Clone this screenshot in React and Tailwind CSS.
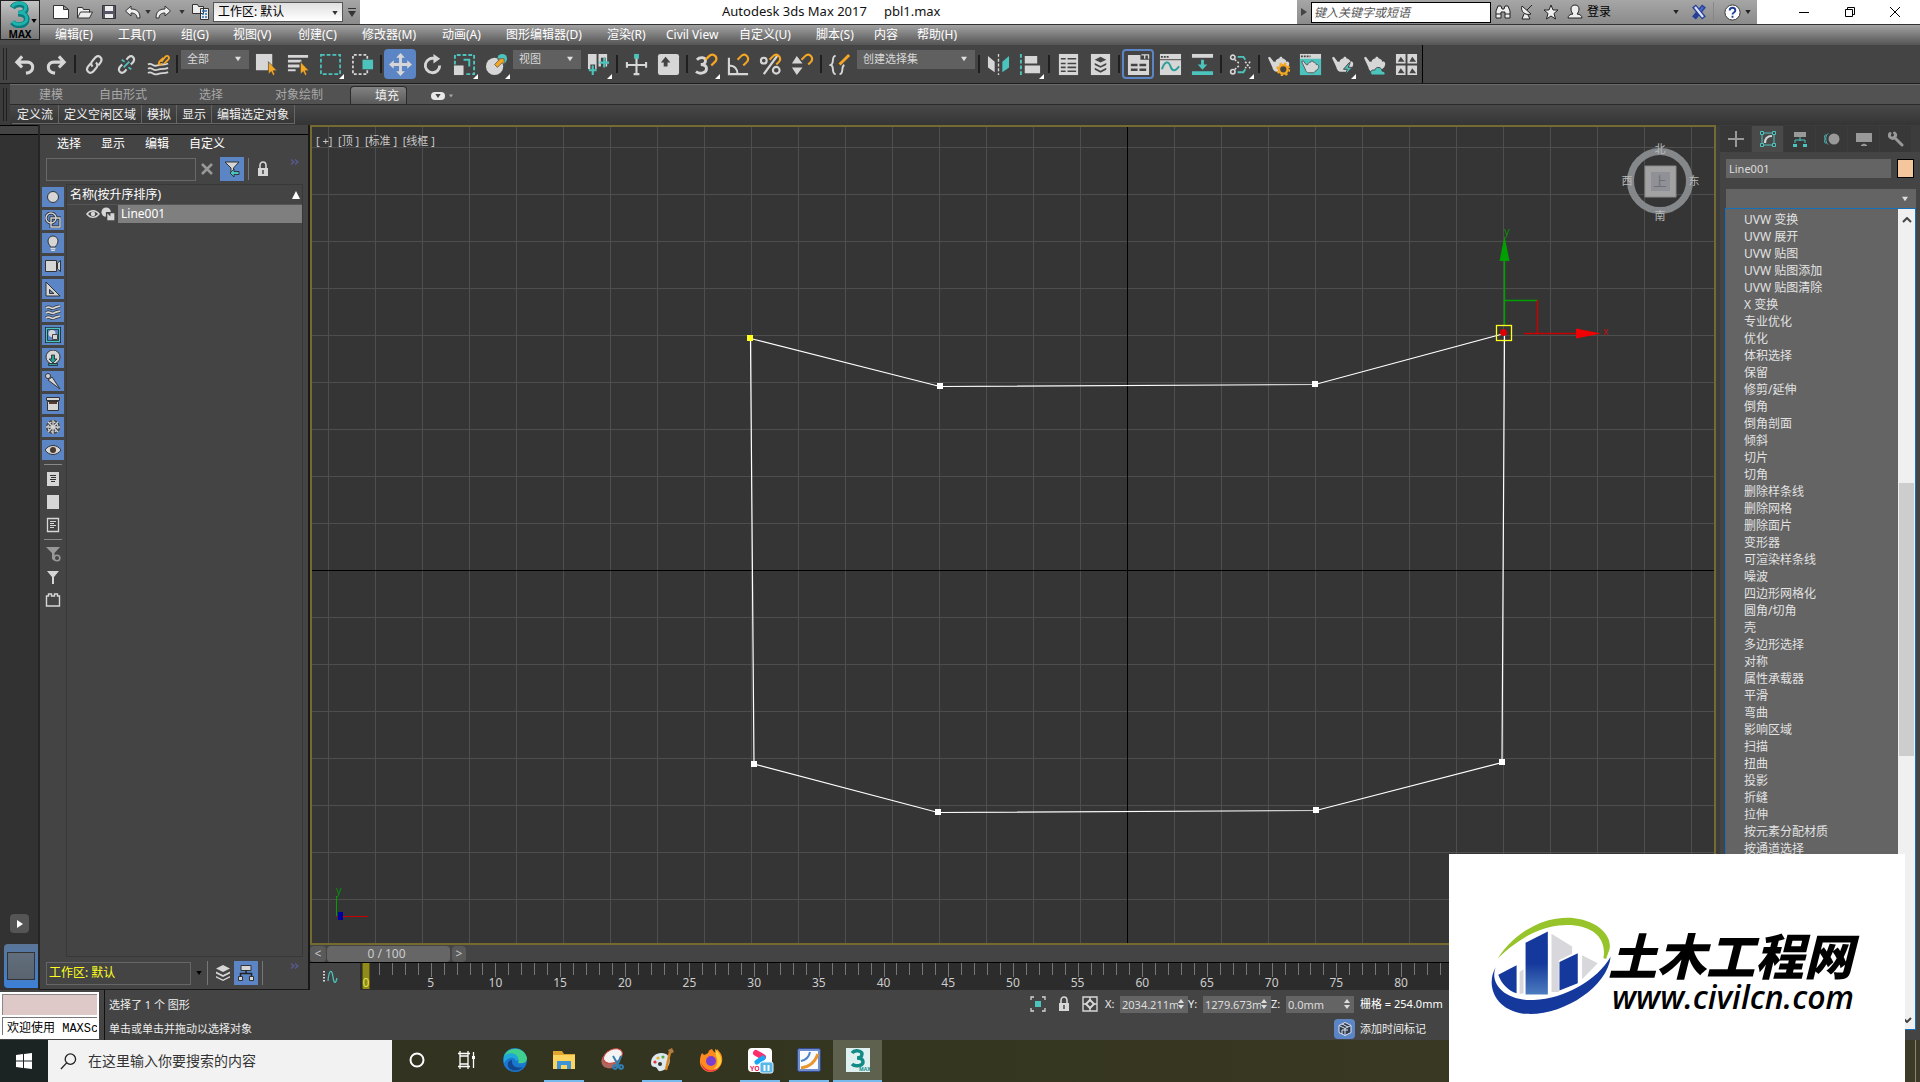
import clsx from 'clsx';

const G = '#d6d6d6';
const T = '#4cc3bd';
const O = '#f5a623';

const teapot = (
  <path fill={G} d="M9 9C9 7 11 6 13 5.500c0-2 3-2 3 0 2 .5 4 1.500 4 3.500 3-1 4 2 2.500 5-.8 1.500-2 2.500-3.500 3-1 2-2 2.500-3 2.500h-6c-2 0-4-2-4.500-5L1 5l2-1 4 5z" />
);

const icons = {
  undo: <path fill="none" stroke={G} strokeWidth="3.200" d="M5 9.500h10a5.500 5 0 0 1 5.500 5.500c0 4-3 5.500-7 6M9.500 3.500L4 9.500l5.500 5.500" />,
  redo: <path fill="none" stroke={G} strokeWidth="3.200" d="M19 9.500H9A5.500 5 0 0 0 3.500 15c0 4 3 5.500 7 6M14.500 3.500L20 9.500l-5.500 5.500" />,
  link: (
    <g fill="none" stroke={G} strokeWidth="2.200">
      <path d="M10 14c-2-2-2-4 0-6l3-3.500c4-3 8 1 5.500 5L16 13" />
      <path d="M13.500 10c2 2 2 4 0 6l-3 3.500c-4 3-8-1-5.500-5L8 11" />
    </g>
  ),
  unlink: (
    <g fill="none" stroke={G} strokeWidth="2.200">
      <path d="M12 7l2-2.500c4-3 7.500 1 5 5L16.500 12" />
      <path d="M12 17l-2 2.500c-4 3-7.500-1-5-5L7.500 12" />
      <path stroke={T} strokeWidth="1.800" d="M9 15l6-6M7 7l3 2M17 17l-3-2" />
    </g>
  ),
  bind: (
    <g fill="none" strokeWidth="1.900">
      <path stroke={G} d="M1 12c4-3 5 3 10 1s7 0 11-2M1 16.500c4-3 5 3 10 1s7 0 11-2M1 21c4-3 5 3 10 1s7 0 11-2" />
      <path stroke={O} d="M15 9l4-5c3-3 5 1 3 3l-4 4M17 5l-4 4c-2 3 1 4 3 2" />
    </g>
  ),
  selectObj: (
    <>
      <path fill={G} d="M1 1h17v17H1z" />
      <path fill={O} stroke="#444" strokeWidth=".7" d="M14 9v13l3-2.500 1.800 4 2-1-1.800-4h4z" />
    </>
  ),
  selectName: (
    <>
      <path fill={G} d="M1 2h21v3H1zM1 7h14v3H1zM1 12h12v3H1zM1 17h8v2H1z" />
      <path fill={O} stroke="#444" strokeWidth=".7" d="M14 9v13l3-2.500 1.800 4 2-1-1.800-4h4z" />
    </>
  ),
  rect: <path fill="none" stroke={T} strokeWidth="1.800" strokeDasharray="4 2" d="M2 2h20v20H2z" />,
  windowSel: (
    <>
      <path fill="none" stroke={G} strokeWidth="1.800" strokeDasharray="3 2" d="M17 6V2H2v20h15v-4" />
      <path fill={T} d="M12 7h11v10H12z" />
    </>
  ),
  move: <path fill={G} d="M12 0l4.500 5h-3v5.500H19v-3l5 4.500-5 4.500v-3h-5.500V19h3L12 24l-4.500-5h3v-5.500H5v3L0 12l5-4.500v3h5.500V5h-3z" />,
  rotate: (
    <>
      <path fill="none" stroke={G} strokeWidth="3" d="M19.500 13a7.500 7.500 0 1 1-5-7" />
      <path fill={G} d="M13 1l7 5-7 5z" />
    </>
  ),
  scale: (
    <>
      <path fill="none" stroke={T} strokeWidth="2" strokeDasharray="4 2" d="M2 12V2h20v20H12" />
      <path fill={G} d="M1 13h10v10H1z" />
      <path fill="none" stroke={T} strokeWidth="2" d="M11 7h6v7" />
    </>
  ),
  place: (
    <>
      <circle cx="10" cy="14" r="9" fill={G} />
      <circle cx="18" cy="6" r="5" fill={T} />
      <path fill={O} stroke="#555" strokeWidth=".8" d="M10 12l5-5-2-1h7v6l-2-2-5 5z" />
    </>
  ),
  pivot: (
    <>
      <path fill={G} d="M1 1h9v16H1zM12 1h9v13h-9z" />
      <path stroke="#444" strokeWidth="5" d="M6 12v11M17 5v11" />
      <path stroke={T} strokeWidth="2.200" d="M6 13v10M2 18h8M18 5v10M13 10h10" />
    </>
  ),
  manipulate: (
    <>
      <path stroke={G} strokeWidth="2.200" d="M12 5v18M1 12.500h22M2 9.500v6M22 9.500v6M9 22h6" />
      <path fill={T} d="M9.500 1h5v5h-5z" />
    </>
  ),
  keyboard: (
    <>
      <rect x="1" y="1" width="22" height="22" rx="2.500" fill={G} />
      <path fill="#444" d="M9 4l5 6h-3v4H7v-4H4z" />
    </>
  ),
  snap: (
    <>
      <path fill="none" stroke={G} strokeWidth="3" d="M2 7c3-3 9-3 9 1 0 3-3 4-5 4 3 0 6 1 6 4.500 0 4.500-7 6-11 3" />
      <path fill="none" stroke={O} strokeWidth="2.400" d="M11 7l4-4c4-4 10 2 6 6l-4 4" />
    </>
  ),
  angle: (
    <>
      <path fill="none" stroke={G} strokeWidth="2.200" d="M2 5v17h20M2 13c6 0 9 4 9 9" />
      <path fill="none" stroke={O} strokeWidth="2.200" d="M11 7l4-4c4-4 9 2 6 6l-4 4" />
    </>
  ),
  percent: (
    <>
      <path fill="none" stroke={G} strokeWidth="2.400" d="M19 3L5 22" />
      <circle cx="5" cy="8" r="3" fill="none" stroke={G} strokeWidth="2.200" />
      <circle cx="18" cy="18" r="3.500" fill="none" stroke={G} strokeWidth="2.200" />
      <path fill="none" stroke={O} strokeWidth="2.200" d="M11 7l4-4c4-4 9 2 6 6l-3 3" />
    </>
  ),
  spinner: (
    <>
      <path fill={G} d="M6 3l6 8H1zM6 23l6-8H1z" />
      <path fill="none" stroke={O} strokeWidth="2.200" d="M11 7l4-4c4-4 9 2 6 6l-3 3" />
    </>
  ),
  sets: (
    <>
      <path fill="none" stroke={G} strokeWidth="2" d="M7 3c-5 0-1 8-5 9.500 4 1 0 9.500 5 9.500M11 22c5 0 1-8 5-9.500" />
      <path stroke={O} strokeWidth="3" d="M11 12L21 2" />
    </>
  ),
  mirror: (
    <>
      <path fill={G} d="M1 3l7 6v11l-7-5z" />
      <path stroke={G} strokeWidth="1.400" strokeDasharray="3 2" d="M12 1v22" />
      <path fill={T} d="M23 3l-7 6v11l7-5z" />
    </>
  ),
  align: (
    <>
      <path stroke={T} strokeWidth="2" strokeDasharray="4 2" d="M2 1v22" />
      <path fill={G} d="M6 3h13v8H6zM6 13h16v8H6z" />
    </>
  ),
  table: (
    <>
      <path fill={G} d="M2 1h20v22H2z" />
      <path stroke="#444" strokeWidth="1.600" d="M4 6h5M11 6h9M4 11h5M11 11h9M4 15h5M11 15h9M4 19h5M11 19h9" />
    </>
  ),
  layers: (
    <>
      <path fill={G} d="M2 1h20v22H2z" />
      <path fill="#444" d="M12 4l6 3-6 3-6-3zM6 10.500l6 3 6-3v2l-6 3-6-3zM6 15.500l6 3 6-3v2l-6 3-6-3z" />
    </>
  ),
  ribbon: (
    <>
      <path fill={G} d="M1 2h13v5h9v16H1z" />
      <path fill="none" stroke={G} strokeWidth="1.400" d="M15 2h7.500v4M18.500 2v4" />
      <path stroke="#444" strokeWidth="2.400" d="M4 12.500h7M13 12.500h7M4 17.500h7M13 17.500h7" />
    </>
  ),
  curve: (
    <>
      <path fill={G} d="M1 1h22v22H1z" />
      <path stroke="#444" strokeWidth="2" strokeDasharray="2 1" d="M2 4h9" />
      <path stroke="#444" d="M1 7h22" />
      <path fill="none" stroke="#2b9d99" strokeWidth="2" d="M3 17c3-9 7-9 9-3s5 5 9 0" />
    </>
  ),
  schematic: (
    <>
      <path fill={G} d="M1 1h22v4H1z" />
      <path fill={T} d="M1 19h22v4H1zM10.500 7h3v5h3.500l-5 5.500L7 12h3.500z" />
    </>
  ),
  material: (
    <>
      <g fill="none" stroke={G} strokeWidth="1.700">
        <circle cx="4" cy="4.500" r="2.300" /><circle cx="4" cy="19.500" r="2.300" />
        <path strokeDasharray="2 1.500" d="M6 7l5 4M6 17l5-4M17 9l5 7M22 9l-5 7" />
      </g>
      <path fill="none" stroke={T} strokeWidth="2" d="M9 4h6l2 3M9 20h6l2-3" />
    </>
  ),
  renderSetup: (
    <>
      {teapot}
      <circle cx="17" cy="17" r="4.500" fill="#444" stroke={O} strokeWidth="2.500" />
      <circle cx="17" cy="17" r="6.300" fill="none" stroke={O} strokeWidth="1.800" strokeDasharray="2.500 2.450" />
    </>
  ),
  frame: (
    <>
      <path fill={G} d="M1 1h22v22H1z" />
      <path fill={T} d="M1 6h22v17H1z" />
      <path stroke="#444" strokeWidth="2" strokeDasharray="2 1" d="M2 3.500h10" />
      <g transform="translate(2 5) scale(.8)" stroke="#444">{teapot}</g>
    </>
  ),
  render: <>{teapot}<path fill={T} stroke="#444" d="M19 10l-6 7h4l-2 6 7-8h-4l2-5z" /></>,
  cloud: <>{teapot}<path fill={T} stroke="#444" d="M9 23c-3-4 1-6 3-5 2-5 8-3 8 1 3 0 4 3 2 4z" /></>,
  gallery: (
    <>
      <path fill={G} d="M1 1h10v10H1zM13 1h10v10H13zM1 13h10v10H1zM13 13h10v10H13z" />
      <path fill="#444" d="M3 9l3-5 4 5zM15 9l3-5 4 5zM3 21l3-5 4 5zM15 21l3-5 4 5z" />
    </>
  ),
};

const side = {
  geometry: <circle cx="8" cy="8" r="5.500" fill={G} stroke="#333" />,
  shapes: <><circle cx="6" cy="6" r="5" fill="none" stroke="#222" strokeWidth="2.800" /><path fill="none" stroke="#222" strokeWidth="2.800" d="M6 6h9v9H6z" /><circle cx="6" cy="6" r="5" fill="none" stroke={G} strokeWidth="1.400" /><path fill="none" stroke={G} strokeWidth="1.400" d="M6 6h9v9H6z" /></>,
  light: <><path fill={G} stroke="#333" d="M8 1a5 5 0 0 1 5 5c0 3-2 4-2.500 6h-5C5 10 3 9 3 6a5 5 0 0 1 5-5z" /><path stroke={G} strokeWidth="1.500" d="M5.500 13.500h5M6 15.500h4" /></>,
  camera: <path fill={G} stroke="#333" d="M.5 2.500h11v11H.5zM12.500 5l3-2.500v11l-3-2.500z" />,
  helper: <><path fill={G} stroke="#333" d="M1 1l14 14H1z" /><path fill="#5f86c0" stroke="#333" d="M4.500 8.500L9 12.500H4.500z" /></>,
  warp: <g fill="none" strokeWidth="1.700"><path stroke="#333" strokeWidth="3.200" d="M1 4c4-3 5 2 8 0s4-1 6-2M1 9c4-3 5 2 8 0s4-1 6-2M1 14c4-3 5 2 8 0s4-1 6-2" /><path stroke={G} d="M1 4c4-3 5 2 8 0s4-1 6-2M1 9c4-3 5 2 8 0s4-1 6-2M1 14c4-3 5 2 8 0s4-1 6-2" /></g>,
  group: <><path fill="none" stroke="#223" strokeWidth="3" d="M1.500 1.500h13v13h-13z" /><path fill="none" stroke={T} strokeWidth="1.300" d="M1.500 1.500h13v13h-13z" /><circle cx="7" cy="6.500" r="3.500" fill={G} /><path fill={G} stroke="#444" d="M7.500 7.500h5v5h-5z" /></>,
  xref: <><circle cx="8" cy="7" r="7" fill={G} stroke="#333" /><path fill="#2ea08f" stroke="#223" strokeWidth=".8" d="M6.500 5h3v4h2.500l-4 4-4-4h2.500zM3.500 13.500h9v2h-9z" /></>,
  bone: <><path fill={G} stroke="#333" d="M3 7l4-3 8 12z" /><circle cx="3" cy="3" r="2.500" fill={G} stroke="#333" /></>,
  container: <><path fill={G} stroke="#333" d="M1.500 1.500h13v3h-13zM2.500 5.500h11v9h-11z" /><path stroke="#5a3d2e" strokeWidth="2" d="M4 7h8" /></>,
  frozen: <><circle cx="8" cy="8" r="7" fill="#444" /><circle cx="8" cy="8" r="5" fill="none" stroke={G} strokeWidth="1.300" strokeDasharray="2 1.900" /><path stroke={G} strokeWidth="1.300" d="M8 1v14M1 8h14M3 3l10 10M13 3L3 13" /></>,
  eye: <><path fill={G} stroke="#333" d="M0 8c4-6 12-6 16 0-4 6-12 6-16 0z" /><circle cx="8" cy="8" r="3" fill="#4a3a2c" /></>,
  listAll: <><path fill={G} d="M2 1h12v14H2z" /><path stroke="#333" d="M5 4.500h6M6 6.500h5M5 8.500h6M6 10.500h4" /></>,
  listNone: <path fill={G} d="M2 1h12v14H2z" />,
  listInvert: <><path fill="none" stroke={G} strokeWidth="1.300" d="M2.500 1.500h11v13h-11z" /><path stroke={G} d="M5 4.500h6M5 6.500h4M5 8.500h6M5 10.500h4" /></>,
  filterCfg: <><path fill="#999" d="M1 1h14L9.500 7v8L7 13V7z" /><circle cx="12" cy="12" r="2.800" fill="#444" stroke="#999" strokeWidth="1.600" /></>,
  filter: <path fill={G} d="M2 2h12L9 8v7H7V8z" />,
  block: <path fill="none" stroke={G} strokeWidth="1.400" d="M1.500 4h2V2h3v2h3V2h3v2h2v10h-13z" />,
};

const sideTools = ['geometry', 'shapes', 'light', 'camera', 'helper', 'warp', 'group', 'xref', 'bone', 'container', 'frozen', 'eye'];

const menus = [
  ['编辑(E)', 'w-[63px]'], ['工具(T)', 'w-[63px]'], ['组(G)', 'w-[52px]'], ['视图(V)', 'w-[65px]'],
  ['创建(C)', 'w-16'], ['修改器(M)', 'w-20'], ['动画(A)', 'w-16'], ['图形编辑器(D)', 'w-[101px]'],
  ['渲染(R)', 'w-[59px]'], ['Civil View', 'w-[73px]'], ['自定义(U)', 'w-[77px]'], ['脚本(S)', 'w-[58px]'],
  ['内容', 'w-[43px]'], ['帮助(H)', 'w-[50px]'],
];

const modifiers = [
  'UVW 变换', 'UVW 展开', 'UVW 贴图', 'UVW 贴图添加', 'UVW 贴图清除', 'X 变换', '专业优化', '优化', '体积选择', '保留',
  '修剪/延伸', '倒角', '倒角剖面', '倾斜', '切片', '切角', '删除样条线', '删除网格', '删除面片', '变形器', '可渲染样条线',
  '噪波', '四边形网格化', '圆角/切角', '壳', '多边形选择', '对称', '属性承载器', '平滑', '弯曲', '影响区域', '扫描', '扭曲',
  '投影', '折缝', '拉伸', '按元素分配材质', '按通道选择',
];

const frames = Array.from({ length: 100 }, (_, i) => i);

function Caret({ className }) {
  return (
    <svg viewBox="0 0 8 6" className={clsx('pointer-events-none shrink-0', className)} fill="currentColor" aria-hidden="true">
      <path d="M0 0h8L4 6z" />
    </svg>
  );
}

function Tool({ name, active, framed, flyout }) {
  return (
    <button
      aria-label={name}
      className={clsx(
        'relative flex h-[30px] w-8 shrink-0 items-center justify-center',
        active && 'rounded-sm bg-[#5b85c4]',
        framed && 'rounded-sm border-2 border-[#5b85c4]',
      )}
    >
      <svg viewBox="0 0 24 24" className="h-[23px] w-[23px] shrink-0">{icons[name]}</svg>
      {flyout && (
        <svg viewBox="0 0 5 5" className="absolute right-0.5 bottom-0 h-[5px] w-[5px]"><path d="M5 0v5H0z" fill="#fff" /></svg>
      )}
    </button>
  );
}

function Gap() {
  return (
    <div className="flex w-1.5 shrink-0 justify-center">
      <div className="h-[18px] w-0.5 bg-[#1f1f1f]" />
    </div>
  );
}

function ToolSelect({ label, value, className }) {
  return (
    <div className={clsx('relative mx-px mt-[5px] h-[19px] shrink-0 self-start bg-[#606060]', className)}>
      <select aria-label={label} className="block h-full w-full appearance-none pl-1.5 text-[11px] text-[#d8d8d8]">
        <option>{value}</option>
      </select>
      <Caret className="absolute top-1.5 right-2 h-1.5 w-1.5 text-[#e0e0e0]" />
    </div>
  );
}

function TitleBar() {
  return (
    <div className="flex h-6 bg-white">
      <div className="flex w-80 shrink-0 items-center bg-gradient-to-b from-[#a6a6a6] to-[#8b8b8b] pl-2 text-[#333]">
        <button aria-label="新建" className="flex w-[25px] justify-center">
          <svg viewBox="0 0 16 16" className="h-4 w-4"><path fill="#fff" stroke="#333" d="M.5 1.500h10l5 4v9H.5zM10.500 1.500v4h5" /></svg>
        </button>
        <button aria-label="打开" className="flex w-6 justify-center">
          <svg viewBox="0 0 16 16" className="h-4 w-4"><path fill="#eee" stroke="#333" d="M.5 14V3.500h5l1 2h6v3M.5 14l3-6h12l-3 6z" /></svg>
        </button>
        <button aria-label="保存" className="flex w-6 justify-center">
          <svg viewBox="0 0 16 16" className="h-4 w-4"><path fill="#556" stroke="#333" d="M1.500 1.500h13v13h-13z" /><path fill="#eee" d="M4 2h8v5H4zM4 10h8v4H4z" /></svg>
        </button>
        <button aria-label="撤消" className="flex w-6 justify-center">
          <svg viewBox="0 0 16 16" className="h-4 w-4"><path fill="#eee" stroke="#333" d="M.5 7L6 2v3c6 0 9 3 9 9h-3c0-3-2-5-6-5v3z" /></svg>
        </button>
        <Caret className="h-1 w-1.5" />
        <button aria-label="重做" className="flex w-6 justify-center">
          <svg viewBox="0 0 16 16" className="h-4 w-4"><path fill="#eee" stroke="#333" d="M15.500 7L10 2v3c-6 0-9 3-9 9h3c0-3 2-5 6-5v3z" /></svg>
        </button>
        <Caret className="mx-1 h-1 w-1.5" />
        <button aria-label="项目" className="flex w-6 justify-center">
          <svg viewBox="0 0 18 18" className="h-[18px] w-[18px]"><path fill="#eee" stroke="#333" d="M.5 1.500h5l1 2h5v7H.5zM8.500 5.500h8v11h-8z" /><path stroke="#2a6fb0" strokeWidth="1.500" d="M10 8h5M10 11h2M13 11h2M10 14h2M13 14h2" /></svg>
        </button>
        <div className="relative h-5 w-[130px] border border-[#555] bg-gradient-to-b from-[#e0e0e0] to-white">
          <select aria-label="工作区" className="block h-full w-full appearance-none pl-1 text-xs text-black"><option>工作区: 默认</option></select>
          <Caret className="absolute top-2 right-1 h-1 w-1.5" />
        </div>
        <button aria-label="自定义快速访问" className="flex flex-1 flex-col items-center gap-0.5">
          <span className="h-px w-2 bg-[#333]" />
          <Caret className="h-1.5 w-2" />
        </button>
      </div>
      <h1 className="flex flex-1 items-center gap-[17px] pl-[362px] text-[13px] text-[#111]">
        <span>Autodesk 3ds Max 2017</span>
        <span>pbl1.max</span>
      </h1>
      <div className="flex w-[460px] shrink-0 items-center bg-gradient-to-b from-[#a6a6a6] to-[#8b8b8b] text-[#222]">
        <svg viewBox="0 0 6 8" className="mx-1 h-2 w-1.5"><path d="M0 0l6 4-6 4z" fill="#444" /></svg>
        <input aria-label="搜索" placeholder="键入关键字或短语" className="h-[21px] w-[180px] border border-black bg-white px-0.5 text-xs italic placeholder:text-[#555]" />
        <button aria-label="查找" className="flex w-6 justify-center">
          <svg viewBox="0 0 16 16" className="h-4 w-4"><path fill="#eee" stroke="#222" d="M1 14V7l2-5h3l1 3h2l1-3h3l2 5v7h-5V8H6v6zM1 10h5M10 10h5" /></svg>
        </button>
        <button aria-label="通信中心" className="flex w-6 justify-center">
          <svg viewBox="0 0 16 16" className="h-4 w-4"><path fill="#eee" stroke="#222" d="M3 2c-2 5 3 10 9 8zM8 6l5-5M5 10l-2 5h8l-2-4" /></svg>
        </button>
        <button aria-label="收藏夹" className="flex w-6 justify-center">
          <svg viewBox="0 0 16 16" className="h-4 w-4"><path fill="#eee" stroke="#222" d="M8 1l2 5h5l-4 3.500 1.500 5.500L8 12l-4.500 3L5 9.500 1 6h5z" /></svg>
        </button>
        <button className="flex items-center gap-1 text-xs text-black">
          <svg viewBox="0 0 16 16" className="ml-1 h-4 w-4"><path fill="#eee" stroke="#222" d="M8 1c3 0 4 2 4 4s-1 4-2 5c3 0 5 2 5 4H1c0-2 2-4 5-4-1-1-2-3-2-5s1-4 4-4z" /></svg>
          登录
        </button>
        <Caret className="mr-3 ml-auto h-1 w-1.5" />
        <svg viewBox="0 0 16 16" className="h-4 w-4">
          <path fill="none" stroke="#25409a" strokeWidth="5" d="M3 2l10 12M13 2L3 14" />
          <path stroke="#dfe6fa" strokeWidth="2.200" d="M4 3l8 10" />
          <path stroke="#4a68c8" strokeWidth="2.200" d="M12 3l-3 4" />
        </svg>
        <div className="mx-1.5 h-5 w-px bg-[#888]" />
        <button aria-label="帮助">
          <svg viewBox="0 0 18 18" className="ml-1 h-[17px] w-[17px]"><circle cx="9" cy="9" r="8" fill="#fff" stroke="#333" /><path fill="none" stroke="#1f3f9a" strokeWidth="2" d="M6 7c0-4 6-4 6 0 0 2-3 2-3 4M9 12.500v2" /></svg>
        </button>
        <Caret className="mr-1.5 ml-1 h-1 w-1.5" />
      </div>
      <div className="flex w-[163px] shrink-0 items-center justify-between pr-[19px] pl-[41px]">
        <button aria-label="最小化"><svg viewBox="0 0 12 12" className="h-3 w-3"><path stroke="#000" d="M1 6.500h10" /></svg></button>
        <button aria-label="还原"><svg viewBox="0 0 12 12" className="h-3 w-3" fill="none" stroke="#000"><path d="M1.500 3.500h7v7h-7zM3.500 3V1.500h7v7H9" /></svg></button>
        <button aria-label="关闭"><svg viewBox="0 0 12 12" className="h-3 w-3"><path stroke="#000" d="M1 1l10 10M11 1L1 11" /></svg></button>
      </div>
    </div>
  );
}

function Header() {
  return (
    <header className="flex h-[45px] shrink-0 bg-[#4b4b4b]">
      <button aria-label="应用程序" className="relative flex h-10 w-10 shrink-0 flex-col items-center border border-[#222] bg-gradient-to-b from-[#c4c4c4] to-[#777] text-[10px] leading-3 font-bold text-black">
        <svg viewBox="0 0 24 28" className="h-[27px] w-6 shrink-0">
          <path fill="none" stroke="#0b7b7d" strokeWidth="6" d="M4 7c3-5 14-5 14 1 0 4-4 5-8 5 5 0 9 2 9 6 0 7-11 8-15 3" />
          <path fill="none" stroke="#1fb3ad" strokeWidth="3" d="M4 6c3-5 14-5 14 1 0 4-4 5-8 5 5 0 9 2 9 6 0 7-11 8-15 3" />
        </svg>
        <span>MAX</span>
        <Caret className="absolute right-0.5 bottom-4 h-1 w-1.5" />
      </button>
      <div className="min-w-0 flex-1">
        <TitleBar />
        <nav className="flex h-[21px] items-center border-t border-[#333] bg-gradient-to-b from-[#a3a3a3] to-[#555] pl-[15px] text-xs text-white">
          {menus.map(([label, width]) => (
            <button key={label} className={clsx('shrink-0 text-left leading-4 whitespace-nowrap', width)}>{label}</button>
          ))}
        </nav>
      </div>
    </header>
  );
}

function Toolbar() {
  return (
    <div className="flex h-[39px] shrink-0 border-b border-[#1c1c1c] bg-[#444]">
      <div className="flex items-center border-r border-black pl-[3px]">
        <div className="mr-px h-8 w-1 border-x border-[#222]" />
        <Tool name="undo" />
        <Tool name="redo" />
        <Gap />
        <Tool name="link" />
        <Tool name="unlink" />
        <Tool name="bind" />
        <Gap />
        <ToolSelect label="选择过滤器" value="全部" className="w-[68px]" />
        <Tool name="selectObj" />
        <Tool name="selectName" />
        <Tool name="rect" flyout />
        <Tool name="windowSel" />
        <Gap />
        <Tool name="move" active />
        <Tool name="rotate" />
        <Tool name="scale" flyout />
        <Tool name="place" flyout />
        <ToolSelect label="参考坐标系" value="视图" className="w-[68px]" />
        <Tool name="pivot" flyout />
        <Gap />
        <Tool name="manipulate" />
        <Tool name="keyboard" />
        <Gap />
        <Tool name="snap" flyout />
        <Tool name="angle" />
        <Tool name="percent" />
        <Tool name="spinner" />
        <Gap />
        <Tool name="sets" />
        <ToolSelect label="命名选择集" value="创建选择集" className="w-[118px]" />
        <Gap />
        <Tool name="mirror" />
        <Tool name="align" flyout />
        <Gap />
        <Tool name="table" />
        <Tool name="layers" />
        <Gap />
        <Tool name="ribbon" framed />
        <Tool name="curve" />
        <Tool name="schematic" />
        <Gap />
        <Tool name="material" flyout />
        <Gap />
        <Tool name="renderSetup" />
        <Tool name="frame" />
        <Tool name="render" flyout />
        <Tool name="cloud" />
        <Tool name="gallery" />
      </div>
    </div>
  );
}

function Ribbon() {
  return (
    <div className="flex h-[41px] shrink-0 bg-[#3b3b3b]">
      <div className="mx-[3px] my-1 w-1 shrink-0 border-x border-[#1f1f1f]" />
      <div className="min-w-0 flex-1">
        <div className="flex h-5 items-end border-t border-[#6a6a6a] bg-[#525252] pl-[29px] text-xs leading-[18px] text-[#a8a8a8]">
          <button className="w-[60px] shrink-0 text-left">建模</button>
          <button className="w-[100px] shrink-0 text-left">自由形式</button>
          <button className="w-[76px] shrink-0 text-left">选择</button>
          <button className="w-[75px] shrink-0 text-left">对象绘制</button>
          <button className="h-[18px] w-[57px] shrink-0 rounded-t-sm border border-b-0 border-[#2a2a2a] bg-gradient-to-b from-[#828282] to-[#5a5a5a] pl-6 text-left text-[#f0f0f0]">填充</button>
          <button aria-label="最小化功能区" className="mb-1 ml-6 flex h-2 w-3.5 items-center justify-center rounded-sm bg-[#e8e8e8] text-[#444]"><Caret className="h-1 w-1.5" /></button>
          <Caret className="mb-1.5 ml-1 h-1 w-1" />
        </div>
        <div className="flex h-[21px] items-start border-t border-[#2a2a2a] bg-gradient-to-b from-[#484848] to-[#353535] text-xs leading-[19px] text-[#eee]">
          {['定义流', '定义空闲区域', '模拟', '显示', '编辑选定对象'].map((t) => (
            <button key={t} className="h-[19px] shrink-0 border-r border-b border-[#666] px-[5px] first:ml-0.5">{t}</button>
          ))}
        </div>
      </div>
    </div>
  );
}

function LeftStrip() {
  return (
    <div className="flex w-10 shrink-0 flex-col border-r-2 border-[#252525] bg-[#323232]">
      <div className="h-2.5 border-y border-black bg-[#444]" />
      <button aria-label="展开" className="mt-auto mb-[11px] ml-2.5 flex h-[19px] w-[19px] items-center justify-center rounded-sm bg-[#555]">
        <svg viewBox="0 0 6 8" className="h-2 w-1.5"><path d="M0 0l6 4-6 4z" fill="#fff" /></svg>
      </button>
      <button aria-label="视口布局" className="mb-0.5 ml-1 h-11 rounded-l-sm bg-gradient-to-b from-[#5a7597] to-[#3b80d8] px-[3px] py-2">
        <span className="block h-full border border-[#333] bg-gradient-to-b from-[#626e7c] to-[#5a6470]" />
      </button>
    </div>
  );
}

function More() {
  return (
    <svg viewBox="0 0 10 6" className="mr-2 mb-3.5 ml-auto h-1.5 w-2.5" fill="none" stroke="#5a5a94" strokeWidth="1.300">
      <path d="M1 .5L4 3 1 5.500M5 .5L8 3 5 5.500" />
    </svg>
  );
}

function Explorer() {
  return (
    <section className="flex w-[270px] shrink-0 flex-col border-r-2 border-b border-[#191919] bg-[#444] text-xs text-white">
      <div className="mt-[9px] flex h-[18px] items-center gap-5 border-t border-black pl-[17px]">
        <button>选择</button>
        <button>显示</button>
        <button>编辑</button>
        <button>自定义</button>
      </div>
      <div className="mt-[3px] flex h-7 items-center pl-1.5">
        <input aria-label="查找" className="h-[23px] w-[150px] border border-[#686868] bg-[#444] px-1" />
        <button aria-label="清除" className="mx-[5px] flex w-3 justify-center"><svg viewBox="0 0 12 12" className="h-3 w-3"><path stroke="#999" strokeWidth="2.500" d="M1 1l10 10M11 1L1 11" /></svg></button>
        <button aria-label="过滤" className="ml-0.5 flex h-6 w-6 items-center justify-center bg-[#5b85c4]">
          <svg viewBox="0 0 16 16" className="h-4 w-4"><path fill={G} stroke="#333" d="M1 1h14L9.500 7v6L7 11V7z" /><path fill={T} stroke="#222" strokeWidth=".8" d="M6 12l4-4v2.500h5v3h-5V16z" /></svg>
        </button>
        <div className="mx-1 h-[22px] w-px bg-[#777]" />
        <button aria-label="锁定" className="ml-1"><LockIcon /></button>
        <More />
      </div>
      <div className="mt-px flex flex-1">
        <div className="flex w-[26px] shrink-0 flex-col items-center gap-[3px] pt-[3px]">
          {sideTools.map((n) => (
            <button key={n} aria-label={n} className="flex h-5 w-[22px] items-center justify-center bg-[#5b85c4]">
              <svg viewBox="0 0 16 16" className="h-4 w-4">{side[n]}</svg>
            </button>
          ))}
          <SideRule />
          {['listAll', 'listNone', 'listInvert'].map((n) => <SideButton key={n} name={n} />)}
          <SideRule />
          {['filterCfg', 'filter', 'block'].map((n) => <SideButton key={n} name={n} />)}
        </div>
        <div className="mr-[5px] flex-1 border border-[#383838]">
          <div className="flex h-5 items-center justify-between border-b border-[#555] pr-0.5 pl-[3px]">
            <span>名称(按升序排序)</span>
            <svg viewBox="0 0 8 8" className="h-2 w-2"><path d="M4 0l4 8H0z" fill="#fff" /></svg>
          </div>
          <ul>
            <li className="flex h-[18px] items-center pl-[19px]">
              <svg viewBox="0 0 16 16" className="h-3.5 w-3.5"><path fill="none" stroke={G} strokeWidth="1.500" d="M1 8c4-5 10-5 14 0-4 5-10 5-14 0z" /><circle cx="8" cy="8" r="2.500" fill={G} /></svg>
              <svg viewBox="0 0 16 16" className="ml-px h-[15px] w-[15px]"><circle cx="5.500" cy="5.500" r="5" fill={G} /><path fill={G} stroke="#444" strokeWidth="1.500" d="M6 6h9v9H6z" /><path fill="#444" d="M6 6h4v4z" /></svg>
              <span className="ml-0.5 h-full flex-1 bg-[#7f7f7f] pl-[3px] leading-[18px]">Line001</span>
            </li>
          </ul>
        </div>
      </div>
      <div className="flex h-8 shrink-0 items-center pl-1.5">
        <div className="relative h-[23px] w-[145px] border border-[#666]">
          <select aria-label="工作区" className="block h-full w-full appearance-none pl-0.5 text-xs text-[#ffff1e]"><option>工作区: 默认</option></select>
        </div>
        <Caret className="mx-[5px] h-1 w-1.5 text-black" />
        <div className="h-6 w-px bg-[#777]" />
        <button aria-label="层" className="ml-1 flex w-[22px] justify-center"><svg viewBox="0 0 16 16" className="h-4 w-4"><path fill={G} d="M8 0l7 3.500L8 7 1 3.500zM1 6.500l7 3.500 7-3.500v2L8 12 1 8.500zM1 11l7 3.500 7-3.500v1.500L8 16l-7-3.500z" /></svg></button>
        <button aria-label="层次" className="flex h-6 w-6 items-center justify-center bg-[#5b85c4]"><svg viewBox="0 0 16 16" className="h-4 w-4"><path fill={G} stroke="#333" d="M3 .5h10v5H3zM.5 11.500h4v4h-4zM11.500 11.500h4v4h-4z" /><path fill="none" stroke="#222" strokeWidth="1.500" d="M8 5.500V9M2.500 11V8.500h11V11" /></svg></button>
        <div className="ml-1 h-6 w-px bg-[#777]" />
        <More />
      </div>
    </section>
  );
}

function LockIcon() {
  return (
    <svg viewBox="0 0 12 16" className="h-4 w-3"><path fill="none" stroke={G} strokeWidth="1.600" d="M3 8V4.500a3 3.500 0 0 1 6 0V8" /><path fill={G} d="M1 7h10v8H1z" /><path stroke="#444" strokeWidth="1.500" d="M6 9v4" /></svg>
  );
}

function SideRule() {
  return <div className="mt-px h-0.5 w-[18px] border-t border-[#888]" />;
}

function SideButton({ name }) {
  return (
    <button aria-label={name} className="flex h-5 w-[22px] items-center justify-center">
      <svg viewBox="0 0 16 16" className="h-4 w-4">{side[name]}</svg>
    </button>
  );
}

const vertices = [[940, 386], [1315, 384], [1502, 762], [1316, 810], [938, 812], [754, 764]];

function Viewport() {
  return (
    <div className="relative min-h-0 flex-1 border-2 border-[#756b30] bg-[#353535]">
      <svg className="absolute inset-0 h-full w-full">
        <defs>
          <pattern id="grid" x="1127" y="570" width="47" height="47" patternUnits="userSpaceOnUse">
            <path d="M.5 0v47M0 .5h47" stroke="#4e4e4e" fill="none" />
          </pattern>
        </defs>
        {/* origin shifted so world coordinates share the window origin */}
        <g transform="translate(-312 -127)">
          <rect x="300" y="120" width="4000" height="3000" fill="url(#grid)" />
          <path d="M1127.500 120v3000M300 570.500h4000" stroke="#000" />
          <path fill="none" stroke="#fff" strokeWidth="1.200" d="M750.500 338.500L940 386.500 1315 384.500 1504.500 333.500 1502 762.500 1316 810.500 938 812.500 754 764z" />
          {vertices.map(([x, y]) => <rect key={x} x={x - 3} y={y - 3} width="6" height="6" fill="#fff" />)}
          <rect x="747" y="335" width="6" height="6" fill="#ffff1e" />

          <path fill="none" stroke="#00a000" strokeWidth="1.500" d="M1504.500 325V250M1504.500 300.500h33" />
          <path fill="#00a000" d="M1504.500 236l5 25h-10z" />
          <text x="1504" y="235" fontSize="11" fill="#0a8a0a">y</text>
          <path fill="none" stroke="#c80000" strokeWidth="1.500" d="M1524 333.500h54M1537.500 300v33" />
          <path fill="#f00000" d="M1601 333.500l-25 5v-10z" />
          <text x="1603" y="335" fontSize="10" fill="#c01010">x</text>
          <circle cx="1503.500" cy="332.500" r="3.500" fill="#d00" />
          <rect x="1496.500" y="325.500" width="15" height="15" fill="none" stroke="#ffff1e" strokeWidth="1.300" />

          <path stroke="#00a000" d="M336.500 916v-20" />
          <path stroke="#c80000" d="M337 916.500h31" />
          <path fill="#0000a0" d="M338 912h5v8h-5z" />
          <text x="336" y="894" fontSize="11" fill="#0a8a0a">y</text>
        </g>
      </svg>
      <p className="relative pt-1.5 pl-1 text-[11px] leading-4 text-[#c8c8c8]">[ +]&nbsp; [顶 ]&nbsp; [标准 ]&nbsp; [线框 ]</p>
      <svg viewBox="0 0 84 84" className="absolute top-3 right-3 h-[84px] w-[84px]">
        <circle cx="42" cy="42" r="29.500" fill="none" stroke="#85888b" strokeWidth="7" />
        <path fill="#a2a2a2" stroke="#8a8a8a" d="M27 27h31v31H27z" />
        <path fill="#8f9196" d="M33 33h19v19H33z" />
        <g fontSize="11" fill="#b9b9b9" textAnchor="middle">
          <text x="42" y="47" fontSize="13" fill="#6d7077">上</text>
          <text x="42" y="14">北</text>
          <text x="42" y="81">南</text>
          <text x="9" y="46">西</text>
          <text x="76" y="46">东</text>
        </g>
      </svg>
    </div>
  );
}

function Timeline() {
  return (
    <div className="shrink-0 bg-[#444] text-[#ccc]">
      <div className="flex h-[18px] items-center gap-px border-b border-black text-xs">
        <button className="h-4 w-4 rounded-sm bg-[#5a5a5a] leading-4">&lt;</button>
        <button className="h-4 w-[123px] rounded-sm bg-[#666] pr-1 leading-4">0 / 100</button>
        <button className="ml-px h-4 w-3.5 rounded-sm bg-[#5a5a5a] leading-4">&gt;</button>
      </div>
      <div className="flex h-[27px] bg-[#2c2c2c]">
        <button aria-label="轨迹曲线" className="flex w-[50px] shrink-0 items-center bg-[#444] pl-3">
          <svg viewBox="0 0 16 14" className="h-3.5 w-4"><path stroke={G} strokeWidth="2" strokeDasharray="1.500 1.500" d="M2 1v12" /><path fill="none" stroke={T} strokeWidth="1.300" d="M6 11c1-12 4-12 5-4s3 6 4 1" /></svg>
        </button>
        <div className="mr-14 ml-[6px] flex flex-1 text-xs">
          {frames.map((f) => (
            <div key={f} className="flex w-0 flex-1 flex-col items-start">
              {f === 0 ? (
                <span className="flex h-[26px] w-2 -translate-x-1 items-end justify-center border-x border-[#5d5a10] bg-[#8f8b1c] leading-3 text-[#e6e24a]">0</span>
              ) : (
                <span className={clsx('w-px bg-[#777]', f % 5 === 0 ? 'h-3.5' : 'h-3')} />
              )}
              {f > 0 && f % 5 === 0 && <span className="flex w-0 justify-center leading-3">{f}</span>}
            </div>
          ))}
        </div>
      </div>
    </div>
  );
}

function Coord({ axis, value }) {
  return (
    <label className="flex items-center text-[#eee]">
      <span className="w-[15px]">{axis}:</span>
      <span className="flex h-[17px] w-[68px] items-center bg-[#646464]">
        <input defaultValue={value} className="h-full w-[58px] pl-0.5 text-[11px] text-[#ddd]" />
        <svg viewBox="0 0 6 12" className="h-3 w-1.5"><path d="M3 1l3 4H0zM3 11l3-4H0z" fill="#ddd" /></svg>
      </span>
    </label>
  );
}

function StatusBar() {
  return (
    <div className="flex h-[50px] shrink-0 bg-[#444] text-[11px] text-[#eee]">
      <div className="mt-0.5 flex h-[47px] w-[99px] shrink-0 flex-col gap-0.5 bg-white p-0.5">
        <div className="h-[21px] shrink-0 border-t border-l border-[#888] bg-[#dfc8c8]" />
        <input aria-label="MAXScript" defaultValue="欢迎使用 MAXScript" className="block h-[18px] w-full shrink-0 border-t border-l border-[#777] bg-white pl-1 font-['Liberation_Mono','Noto_Sans_CJK_SC',monospace] text-xs text-black" />
      </div>
      <div className="ml-[5px] w-px shrink-0 bg-[#111]" />
      <div className="flex flex-1 flex-col gap-2 pt-[7px] pl-1 leading-4">
        <p>选择了 1 个 图形</p>
        <p>单击或单击并拖动以选择对象</p>
      </div>
      <div className="w-[686px] shrink-0 pt-[5px]">
        <div className="flex h-[18px] items-center">
          <svg viewBox="0 0 16 16" className="h-4 w-4"><path fill={T} d="M5 5h6v6H5z" /><path fill="none" stroke={G} strokeWidth="1.300" d="M1 4V1h3M12 1h3v3M15 12v3h-3M4 15H1v-3" /></svg>
          <span className="mx-3"><LockIcon /></span>
          <svg viewBox="0 0 16 16" className="mr-[7px] h-4 w-4"><path fill="none" stroke={G} strokeWidth="1.400" d="M1 1h14v14H1zM8 1v4M8 11v4M1 8h4M11 8h4" /><path fill="none" stroke={G} strokeWidth="2" d="M8 4l4 4-4 4-4-4z" /></svg>
          <Coord axis="X" value="2034.211mm" />
          <Coord axis="Y" value="1279.673mm" />
          <Coord axis="Z" value="0.0mm" />
          <span className="ml-1.5 text-white">栅格 = 254.0mm</span>
        </div>
        <div className="mt-1.5 ml-[304px] flex items-center gap-[5px]">
          <button aria-label="时间标记" className="flex h-5 w-[21px] items-center justify-center rounded-sm bg-[#5b85c4]">
            <svg viewBox="0 0 16 16" className="h-4 w-4" fill="none" stroke="#dde6f5"><path fill="#333a48" d="M8 1.500l6 3v7l-6 3-6-3v-7z" /><path d="M2 4.500l6 3 6-3M8 7.500v7M5 3l6 3M5 13V9l6 0" /></svg>
          </button>
          <span>添加时间标记</span>
        </div>
      </div>
    </div>
  );
}

const panelTabs = [
  ['创建', <path key="p" stroke="#999" strokeWidth="2" d="M8 0v16M0 8h16" />],
  ['修改', <g key="p" fill="none" stroke={T}><path d="M2 2h12v12H2z" /><path fill="#444" d="M.5.5h3v3h-3zM12.500.5h3v3h-3zM.5 12.500h3v3h-3zM12.500 12.500h3v3h-3z" /><path stroke={G} strokeWidth="2.200" d="M5 12c0-4 2-7 7-7" /></g>],
  ['层次', <g key="p"><path fill="#999" d="M2 1h12v5H2z" /><path fill="none" stroke={T} d="M8 6v4M3 12V9h10v3" /><path fill={T} d="M1 13h4v3H1zM11 13h4v3h-4z" /></g>],
  ['运动', <g key="p"><circle cx="10" cy="8" r="5.500" fill="#999" /><path fill="none" stroke={T} d="M4 2.500C1 5 1 11 4 13.500M1.500 3.500c-2 3-2 6 0 9" /></g>],
  ['显示', <path key="p" fill="#999" d="M0 2h16v9H0zM5 14l3-1.500 3 1.500v1H5z" />],
  ['工具', <path key="p" fill="none" stroke="#999" strokeWidth="3" strokeLinecap="round" d="M6 6l8 8M2 2.500a3 3 0 1 0 4.500-.5" />],
];

function CommandPanel() {
  return (
    <aside className="flex w-[204px] shrink-0 flex-col bg-[#3c3c3c] pl-1 text-[#ddd]">
      <div className="mt-px flex h-[26px] gap-px">
        {panelTabs.map(([label, icon], i) => (
          <button key={label} aria-label={label} className={clsx('flex w-[31px] items-center justify-center', i === 1 ? 'bg-[#4a4a4a]' : 'bg-[#383838]')}>
            <svg viewBox="0 0 16 16" className="h-4 w-4">{icon}</svg>
          </button>
        ))}
      </div>
      <div className="flex min-h-0 flex-1 flex-col bg-[#444] pr-1 pl-[5px]">
        <div className="mt-[7px] flex h-[19px] shrink-0 items-center justify-between pr-0.5 pl-px">
          <input aria-label="名称" defaultValue="Line001" className="h-[19px] w-[165px] bg-[#646464] px-[3px] text-[11px]" />
          <button aria-label="颜色" className="h-[19px] w-[17px] border border-black bg-[#f5c69b]" />
        </div>
        <button aria-label="修改器列表" className="mt-[11px] ml-px flex h-[19px] shrink-0 items-center justify-end bg-[#646464] pr-2"><Caret className="h-1.5 w-1.5" /></button>
        <div className="mb-2.5 flex min-h-0 flex-1 border border-[#1670b8] bg-[#646464]">
          <ul role="listbox" className="min-h-0 flex-1 overflow-hidden pt-0.5 pl-[18px] text-xs leading-[17px] text-[#e2e2e2]">
            {modifiers.map((m) => <li key={m} role="option" aria-selected="false">{m}</li>)}
          </ul>
          <div className="flex w-[17px] flex-col items-center bg-[#f0f0f0]">
            <svg viewBox="0 0 10 6" className="mt-2 h-1.5 w-2.5 shrink-0"><path d="M1 5l4-4 4 4" fill="none" stroke="#444" strokeWidth="2" /></svg>
            <div className="mt-[260px] h-[273px] w-[15px] shrink-0 bg-[#cdcdcd]" />
            <svg viewBox="0 0 10 6" className="mt-auto mb-1.5 h-1.5 w-2.5 shrink-0"><path d="M1 1l4 4 4-4" fill="none" stroke="#444" strokeWidth="2" /></svg>
          </div>
        </div>
      </div>
    </aside>
  );
}

const apps = [
  { name: 'Cortana', art: <circle cx="12" cy="12" r="6.500" fill="none" stroke="#fff" strokeWidth="2" /> },
  { name: '任务视图', art: <><path fill="none" stroke="#fff" strokeWidth="1.300" d="M6 8h8v8H6zM4 5.500h12M4 18.500h12M6 3v5M14 3v5M6 16v5M14 16v5M19.500 4v16" /><path fill="#fff" d="M18 8h3v3h-3z" /></> },
  {
    name: 'Edge',
    art: <><circle cx="12" cy="12" r="12" fill="#1b78cf" /><path fill="#3fcf8e" d="M1 8C5-2 21-2 24 10c0 5-5 6-9 5 2-5-2-8-7-8-3 0-5 1-7 1z" /><path fill="#1fa7d8" d="M1 8c5-5 15-3 14 4l-2 1c-1-4-8-5-12 2z" /><path fill="#12478f" d="M9 12c-1 6 5 9 11 7-5 6-17 4-15-4 1-3 3-3 4-3z" /></>,
  },
  { name: '文件资源管理器', open: true, art: <><path fill="#e0a62e" d="M1 3h9l2 3h11v15H1z" /><path fill="#fcd560" d="M1 7h22v14H1z" /><path fill="#3d93d6" d="M5 13h14v8h-4v-4H9v4H5z" /></> },
  { name: '截图工具', art: <><ellipse cx="10" cy="12" rx="10" ry="8" fill="#b0665e" transform="rotate(-25 10 12)" /><ellipse cx="12" cy="8" rx="10" ry="6.500" fill="#f3f3f3" stroke="#c8403a" transform="rotate(-25 12 8)" /><path stroke="#2f7fb5" strokeWidth="2" fill="none" d="M12 8l7 12M20 8l-5 12M14 17a2 2 0 1 0 .1 0M20 17a2 2 0 1 0 .1 0" /></> },
  { name: '画图', open: true, art: <><path fill="#dce8f1" d="M1 15c0-8 8-12 15-9 6 3 5 15-5 17-4 1-3-4-6-4-2 0-4-1-4-4z" /><circle cx="5" cy="14" r="1.600" fill="#d33" /><circle cx="8" cy="10" r="1.600" fill="#e8b020" /><circle cx="13" cy="9" r="1.600" fill="#55a83c" /><circle cx="10" cy="16" r="2" fill="#35382a" /><path stroke="#d9861f" strokeWidth="2.500" d="M20 4l-4 18" /><path fill="#b07a40" d="M18 2l4-2 2 4-4 2z" /></> },
  { name: 'Firefox', art: <><path fill="#ff8a1f" d="M3 5l2 2c2-1 3-1 4-2 1-1 0-3 4-4 1 2 2 3 4 4l1-4c4 4 6 7 5 13-2 7-7 10-12 10C5 24 0 18 1 12c0-3 1-5 2-7z" /><path fill="#ffd03a" d="M16 1c5 4 7 9 6 14-2 5-5 6-7 6 3-3 5-7 2-13z" /><path fill="#e8304c" d="M2 14c2 8 13 12 19 4-4 8-18 8-19-4z" /><circle cx="12" cy="13" r="5" fill="#7a3fd0" /></> },
  { name: '优酷', open: true, art: <><rect width="24" height="24" rx="4" fill="#fff" /><path stroke="#ff2d6b" strokeWidth="6" strokeLinecap="round" d="M8 5l7 4" /><path stroke="#18a8f5" strokeWidth="5" strokeLinecap="round" d="M15 10l-6 4" /><text x="2" y="23" fontSize="7" fontWeight="700" fill="#e8265c">YO</text><rect x="12" y="14" width="13" height="11" rx="2" fill="#56b7e8" stroke="#e8f6ff" /><path stroke="#fff" strokeWidth="2" d="M16.500 17v6M20.500 17v6" /></> },
  { name: '图片工具', open: true, art: <><rect x=".5" y=".5" width="23" height="23" rx="2" fill="#6f8ed0" stroke="#33498a" /><path fill="#fafcff" d="M3 3h18v18H3z" /><path stroke="#4b86c8" strokeWidth="2" fill="none" d="M4 13c5-1 8-4 9-9" /><path stroke="#e8962e" strokeWidth="3" fill="none" d="M4 20c8-1 14-6 17-14" /></> },
  { name: '3ds Max', open: true, active: true, art: <><path fill="#dff0f0" d="M0 0h24v24H0z" /><path fill="none" stroke="#128a86" strokeWidth="3.500" d="M6 5c3-4 10-2 10 1 0 3-3 4-5 4 3 0 6 1 6 4 0 4-8 5-11 2" /><text x="13" y="23" fontSize="5" fontWeight="700" fill="#128a86">MAX</text></> },
];

function Taskbar() {
  return (
    <footer className="flex h-[42px] shrink-0 bg-gradient-to-r from-[#2f3222] via-[#35361f] to-[#3d3a27]">
      <button aria-label="开始" className="flex w-12 shrink-0 items-center justify-center bg-[#1b2323]">
        <svg viewBox="0 0 16 16" className="h-4 w-4"><path fill="#fff" d="M0 2l7-1v6.500H0zM8 1l8-1v7.500H8zM0 8.500h7V15l-7-1zM8 8.500h8V16l-8-1z" /></svg>
      </button>
      <label className="flex w-[344px] shrink-0 items-center bg-[#f2f2f2] pl-3">
        <svg viewBox="0 0 18 18" className="h-[17px] w-[17px]"><circle cx="11" cy="6.500" r="5.500" fill="none" stroke="#222" strokeWidth="1.400" /><path stroke="#222" strokeWidth="1.400" d="M7 10.500L1 17" /></svg>
        <input aria-label="搜索" placeholder="在这里输入你要搜索的内容" className="ml-[11px] flex-1 text-sm placeholder:text-[#333]" />
      </label>
      {apps.map((a) => (
        <button key={a.name} aria-label={a.name} className={clsx('flex w-[49px] shrink-0 flex-col items-center justify-between', a.active && 'bg-[#5f614f]')}>
          <svg viewBox="0 0 24 24" className="mt-2 h-6 w-6 overflow-visible">{a.art}</svg>
          {a.open && <span className={clsx('h-0.5 bg-[#76b9ed]', a.active ? 'w-full' : 'w-10')} />}
        </button>
      ))}
      <div className="mr-1 ml-auto w-px bg-[#8a8875]" />
    </footer>
  );
}

function SiteBadge() {
  return (
    <div className="fixed right-[15px] bottom-0 flex h-[228px] w-[456px] items-start bg-white pt-[62px] pl-10">
      <svg viewBox="208 232 370 300" className="h-[100px] w-[123px] shrink-0">
        <defs>
          <linearGradient id="tower" x1="0" y1="0" x2="0" y2="1">
            <stop offset="0" stopColor="#14389b" />
            <stop offset=".5" stopColor="#14389b" />
            <stop offset="1" stopColor="#4d7cc0" />
          </linearGradient>
        </defs>
        <path fill="#d8d8dc" d="M396 285l62 38v22l-40 20v95h-22zM488 350l47 24-47 48zM300 400l12-8v72l-12 2z" />
        <path fill="url(#tower)" d="M318 312l67-34v190h-67z" />
        <path fill="#14389b" d="M236 408l55-28v84c-24-8-46-28-55-56zM420 370l55-26v90l-55 22z" />
        <path fill="#96c42a" d="M234 360C290 270 390 228 465 238c80 10 115 60 105 95l-10 28-8-3c10-50-20-90-85-98-85-8-160 30-233 100z" />
        <path fill="#14389b" d="M228 386c-20 50 30 102 115 98 95-4 190-60 231-130-10 90-140 176-250 172-90-4-130-80-96-140z" />
      </svg>
      <div className="mt-[15px] -ml-1 text-black italic">
        <p className="text-[49px] leading-[50px] font-black whitespace-nowrap">土木工程网</p>
        <p className="pl-1 font-['Open_Sans','Noto_Sans_CJK_SC',sans-serif] text-[32px] leading-8 font-semibold">www.civilcn.com</p>
      </div>
    </div>
  );
}

export default function App() {
  return (
    <div className="flex h-screen flex-col overflow-hidden bg-[#444] font-['Noto_Sans','Noto_Sans_CJK_SC',sans-serif]">
      <Header />
      <Toolbar />
      <Ribbon />
      <main className="flex min-h-0 flex-1">
        <div className="flex min-w-0 flex-1 flex-col">
          <div className="flex min-h-0 flex-1">
            <LeftStrip />
            <Explorer />
            <div className="flex min-w-0 flex-1 flex-col">
              <Viewport />
              <Timeline />
            </div>
          </div>
          <StatusBar />
        </div>
        <CommandPanel />
      </main>
      <Taskbar />
      <SiteBadge />
    </div>
  );
}
